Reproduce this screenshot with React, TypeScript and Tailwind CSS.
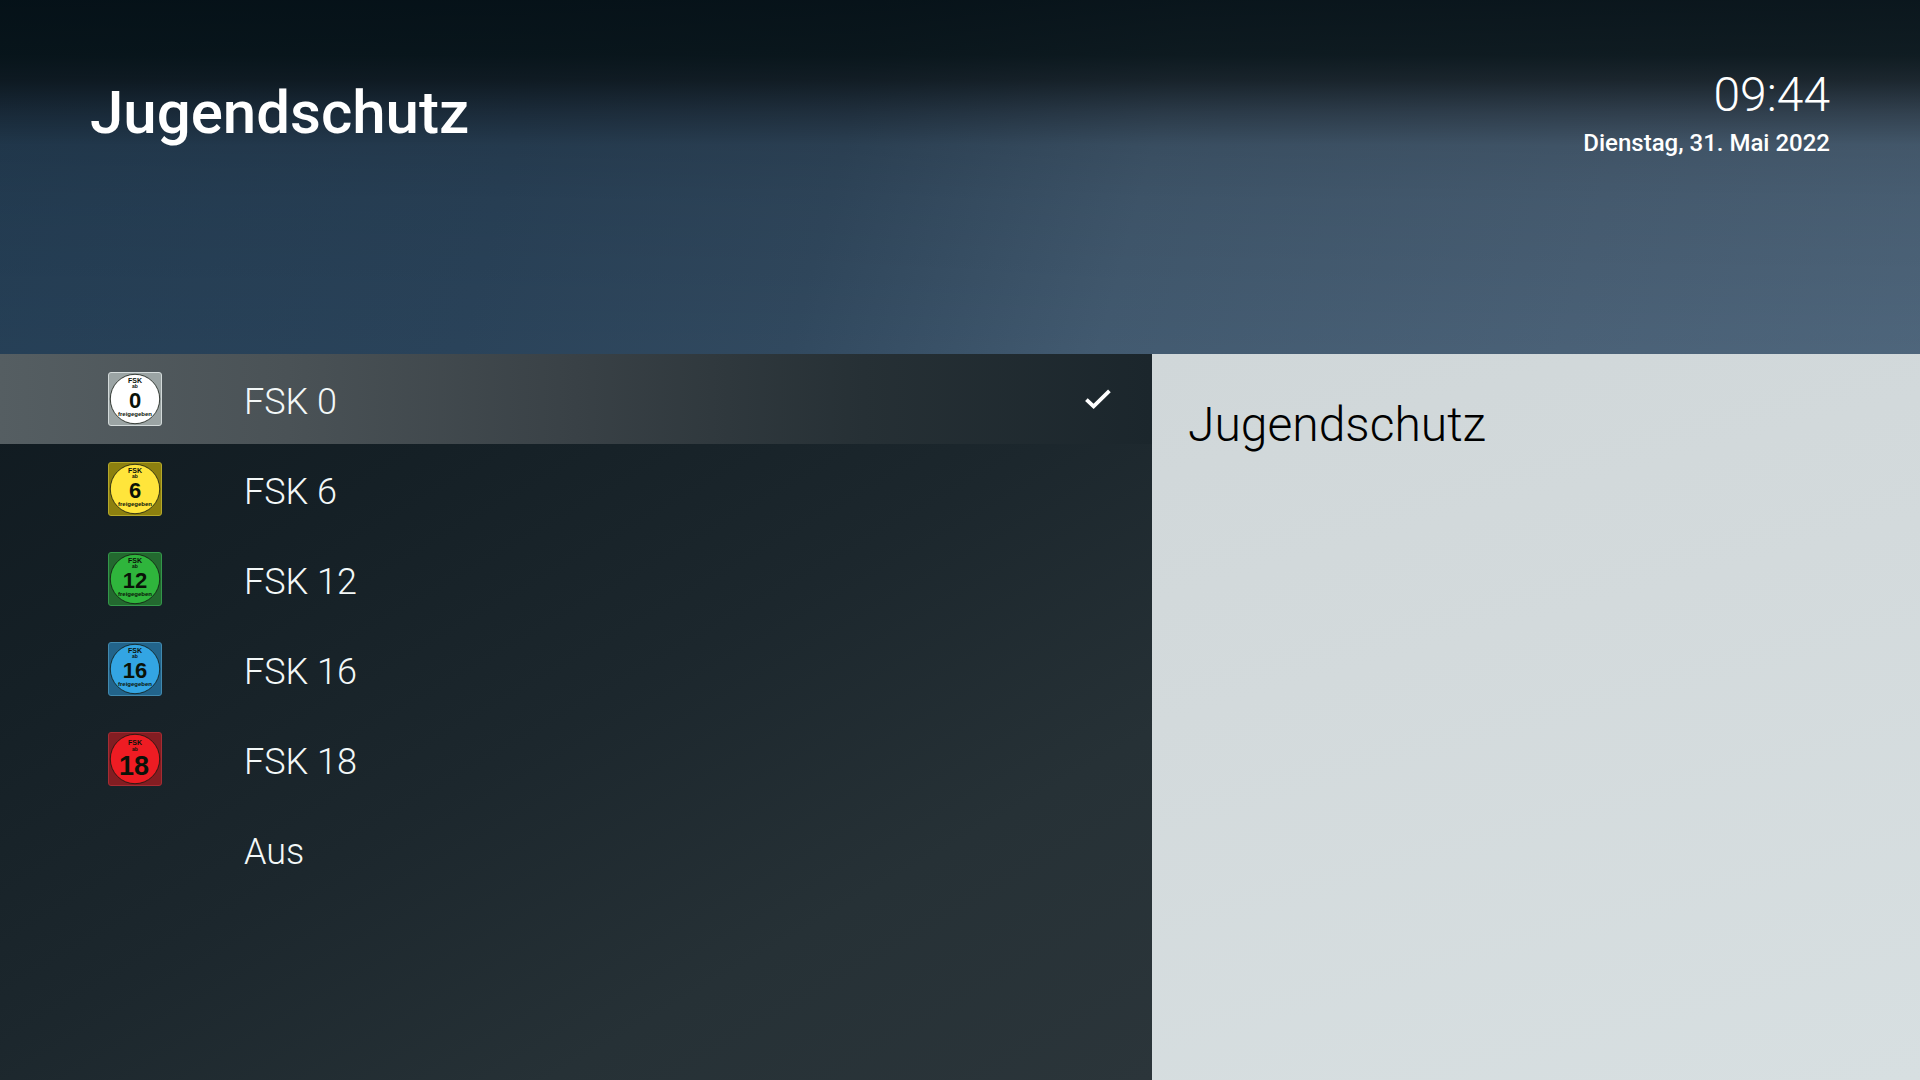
import { useState } from "react";

type Rating = {
  label: string;
  age?: string;
  fill?: string;
  frame?: string;
  edge?: string;
};

const ratings: Rating[] = [
  { label: "FSK 0", age: "0", fill: "#ffffff", frame: "#9ba4a4", edge: "#d3dada" },
  { label: "FSK 6", age: "6", fill: "#ffe53b", frame: "#8d800f", edge: "#b5a829" },
  { label: "FSK 12", age: "12", fill: "#2fb53c", frame: "#23692f", edge: "#33964a" },
  { label: "FSK 16", age: "16", fill: "#33a5e3", frame: "#22648b", edge: "#4189ae" },
  { label: "FSK 18", age: "18", fill: "#ee1c23", frame: "#831d22", edge: "#a52c33" },
  { label: "Aus" },
];

const FskBadge = ({ age, fill, frame, edge }: Rating) => {
  const adult = age === "18";

  return (
    <svg
      viewBox="0 0 54 54"
      className="h-[54px] w-[54px]"
      aria-hidden="true"
      textAnchor="middle"
      fontFamily="'Liberation Sans', sans-serif"
      fontWeight="700"
      fill="#0a1208"
    >
      <rect x="0.5" y="0.5" width="53" height="53" rx="2.5" fill={frame} stroke={edge} />
      <circle cx="27" cy="27" r="24.7" fill={fill} stroke="#10160f" strokeWidth="0.8" />
      <text x="27" y={adult ? 13 : 11} fontSize="7">
        FSK
      </text>
      <text x="27" y={adult ? 19 : 16} fontSize="5">
        ab
      </text>
      <text x={adult ? 26 : 27} y={adult ? 43 : 36} fontSize={adult ? 27 : 22}>
        {age}
      </text>
      {!adult && (
        <text x="27" y="44" fontSize="6">
          freigegeben
        </text>
      )}
    </svg>
  );
};

const CheckIcon = () => (
  <svg
    viewBox="0 0 28 22"
    className="h-[22px] w-7"
    fill="none"
    stroke="#ffffff"
    strokeWidth="3.8"
    aria-hidden="true"
  >
    <path d="M2.4 11.6 L9.6 18.4 L25.4 2.8" />
  </svg>
);

const App = () => {
  const [selected, setSelected] = useState("FSK 0");

  return (
    <div className="flex min-h-screen flex-col bg-[linear-gradient(105deg,#253f56_0%,#2a435a_25%,#31495f_40%,#425a70_54%,#4a6177_75%,#50687e_100%)] font-['Roboto',sans-serif] text-white">
      <header className="flex h-[354px] items-start justify-between bg-[linear-gradient(180deg,rgba(0,10,14,0.86)_0px,rgba(0,10,12,0.8)_55px,rgba(0,4,4,0.64)_80px,rgba(0,0,0,0.36)_112px,rgba(0,0,0,0.14)_145px,rgba(0,0,0,0.08)_200px,rgba(0,0,0,0)_354px)] px-[90px]">
        <h1 className="pt-[83px] text-[60px] leading-[60px] font-medium">
          Jugendschutz
        </h1>
        <div className="pt-[71px] text-right">
          <p className="text-[48px] leading-[48px] font-light">09:44</p>
          <p className="mt-3 text-[24px] leading-6 font-medium">
            Dienstag, 31. Mai 2022
          </p>
        </div>
      </header>

      <main className="flex flex-1">
        <ul className="w-3/5 bg-[linear-gradient(150deg,#101a20_0%,#152026_25%,#1c272d_50%,#263136_75%,#2b353a_100%)]">
          {ratings.map((rating) => (
            <li key={rating.label}>
              <button
                type="button"
                aria-pressed={selected === rating.label}
                onClick={() => setSelected(rating.label)}
                className={
                  selected === rating.label
                    ? "flex h-[90px] w-full items-center bg-[linear-gradient(90deg,#555e62_0%,#4a5256_25%,#394146_50%,#263035_75%,#1b262c_100%)] pr-10 pl-[108px] text-left"
                    : "flex h-[90px] w-full items-center pr-10 pl-[108px] text-left"
                }
              >
                <span className="mr-[82px] w-[54px]">
                  {rating.age && <FskBadge {...rating} />}
                </span>
                <span className="flex-1 pt-1.5 text-[36px] leading-10 font-light text-[#f3f8f8]">
                  {rating.label}
                </span>
                {selected === rating.label && <CheckIcon />}
              </button>
            </li>
          ))}
        </ul>

        <aside className="flex-1 bg-[linear-gradient(165deg,#d0d7d9_0%,#d3dadc_40%,#d7dfe1_100%)] px-9 pt-[47px]">
          <h2 className="text-[48px] leading-[48px] font-light text-black">
            Jugendschutz
          </h2>
        </aside>
      </main>
    </div>
  );
};

export default App;
